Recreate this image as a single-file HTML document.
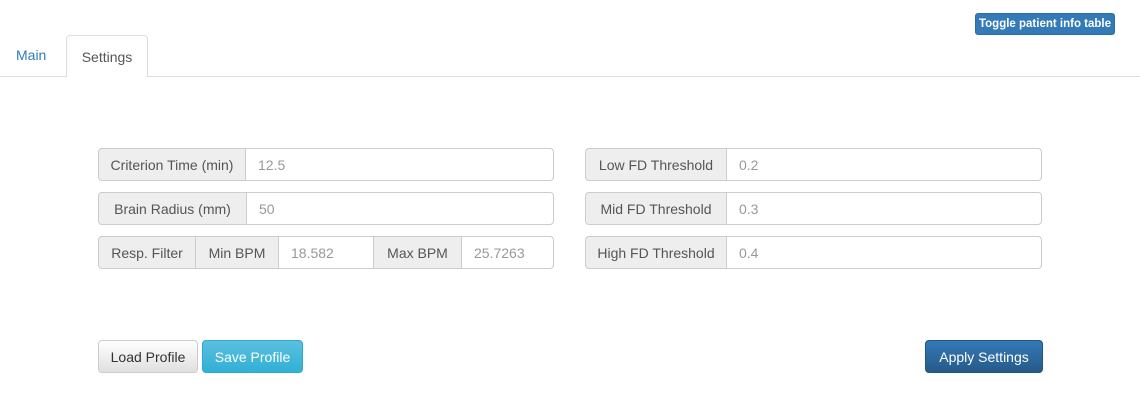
<!DOCTYPE html><html><head><style>
body{margin:0;width:1140px;height:400px;background:#fff;font-family:"Liberation Sans",sans-serif;font-size:14px;color:#555;position:relative;overflow:hidden}
.a{position:absolute;box-sizing:border-box}
.ad{background:#eee;border:1px solid #ccc;color:#555;display:flex;align-items:center;justify-content:center;height:33px}
.in{background:#fff;border:1px solid #ccc;color:#999;display:flex;align-items:center;padding-left:12px;height:33px}
.btn{display:flex;align-items:center;justify-content:center;border-radius:4px;height:33px}
</style></head><body>
<div class="a btn" style="left:975px;top:13px;width:140px;height:22px;background:#337ab7;border:1px solid #2e6da4;color:#fff;font-size:12px;border-radius:3px;font-weight:bold;font-size:11.5px">Toggle patient info table</div>
<div class="a" style="left:0;top:76px;width:1140px;height:1px;background:#ddd"></div>
<div class="a" style="left:16px;top:47px;color:#337ab7">Main</div>
<div class="a" style="left:66px;top:35px;width:82px;height:42px;border:1px solid #ddd;border-bottom:none;border-radius:4px 4px 0 0;background:#fff;color:#555;text-align:center;line-height:42px">Settings</div>

<div class="a ad" style="left:98px;top:148px;width:148px;border-radius:4px 0 0 4px">Criterion Time (min)</div>
<div class="a in" style="left:245px;top:148px;width:309px;border-radius:0 4px 4px 0">12.5</div>
<div class="a ad" style="left:98px;top:192px;width:149px;border-radius:4px 0 0 4px">Brain Radius (mm)</div>
<div class="a in" style="left:246px;top:192px;width:308px;border-radius:0 4px 4px 0">50</div>
<div class="a ad" style="left:98px;top:236px;width:98px;border-radius:4px 0 0 4px">Resp. Filter</div>
<div class="a ad" style="left:195px;top:236px;width:84px">Min BPM</div>
<div class="a in" style="left:278px;top:236px;width:96px">18.582</div>
<div class="a ad" style="left:373px;top:236px;width:89px">Max BPM</div>
<div class="a in" style="left:461px;top:236px;width:93px;border-radius:0 4px 4px 0">25.7263</div>

<div class="a ad" style="left:585px;top:148px;width:142px;border-radius:4px 0 0 4px">Low FD Threshold</div>
<div class="a in" style="left:726px;top:148px;width:316px;border-radius:0 4px 4px 0">0.2</div>
<div class="a ad" style="left:585px;top:192px;width:142px;border-radius:4px 0 0 4px">Mid FD Threshold</div>
<div class="a in" style="left:726px;top:192px;width:316px;border-radius:0 4px 4px 0">0.3</div>
<div class="a ad" style="left:585px;top:236px;width:142px;border-radius:4px 0 0 4px">High FD Threshold</div>
<div class="a in" style="left:726px;top:236px;width:316px;border-radius:0 4px 4px 0">0.4</div>

<div class="a btn" style="left:98px;top:340px;width:100px;background:linear-gradient(#fff,#e0e0e0);border:1px solid #ccc;color:#333">Load Profile</div>
<div class="a btn" style="left:202px;top:340px;width:101px;background:linear-gradient(#5bc0de,#31b0d5);border:1px solid #2aabd2;color:#fff">Save Profile</div>
<div class="a btn" style="left:925px;top:340px;width:118px;background:linear-gradient(#337ab7,#265a88);border:1px solid #245580;color:#fff">Apply Settings</div>
</body></html>
